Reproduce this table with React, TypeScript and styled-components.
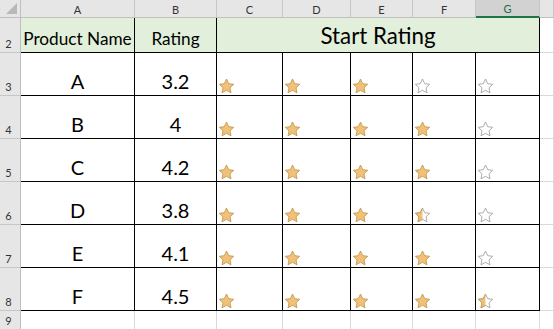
import React from "react";
import styled, { createGlobalStyle, css } from "styled-components";

const GlobalStyle = createGlobalStyle`
  html, body {
    margin: 0;
    padding: 0;
    background: #ffffff;
    overflow: hidden;
  }
  body {
    font-family: Lato, "Open Sans", "Liberation Sans", sans-serif;
  }
`;

const colWidths = [21, 114, 82, 66, 68, 62, 63, 64, 14];
const rowHeights = [18, 35, 43, 43, 43, 43, 43, 43, 19];

const Sheet = styled.div`
  display: grid;
  grid-template-columns: ${colWidths.map((w) => `${w}px`).join(" ")};
  grid-template-rows: ${rowHeights.map((h) => `${h}px`).join(" ")};
  width: 554px;
  height: 329px;
  overflow: hidden;
  background: #ffffff;
`;

const Corner = styled.div`
  position: relative;
  background: #e6e6e6;
  border-right: 1px solid #bfbfbf;
  border-bottom: 1px solid #bfbfbf;
  &::after {
    content: "";
    position: absolute;
    right: 3px;
    bottom: 3px;
    width: 0;
    height: 0;
    border-left: 11px solid transparent;
    border-bottom: 11px solid #b8b8b8;
  }
`;

const ColHead = styled.div<{ $active?: boolean }>`
  display: flex;
  align-items: center;
  justify-content: center;
  background: ${(p) => (p.$active ? "#d2d2d2" : "#e6e6e6")};
  color: ${(p) => (p.$active ? "#1e6b46" : "#333333")};
  border-right: 1px solid #c6c6c6;
  border-bottom: ${(p) => (p.$active ? "2px solid #217346" : "1px solid #bfbfbf")};
  font-size: 11px;
  padding-top: 1px;
  box-sizing: border-box;
`;

const RowHead = styled.div`
  display: flex;
  align-items: flex-end;
  justify-content: center;
  padding: 0 3px 2px 0;
  box-sizing: border-box;
  background: #e6e6e6;
  color: #333333;
  border-right: 1px solid #bfbfbf;
  border-bottom: 1px solid #c6c6c6;
  font-size: 11px;
`;

const Cell = styled.div<{
  $green?: boolean;
  $dark?: boolean;
  $darkRight?: boolean;
  $span?: number;
  $size?: number;
}>`
  display: flex;
  align-items: flex-end;
  justify-content: center;
  box-sizing: border-box;
  overflow: hidden;
  white-space: nowrap;
  color: #000000;
  background: ${(p) => (p.$green ? "#e2efda" : "#ffffff")};
  font-size: ${(p) => p.$size ?? 20}px;
  line-height: 1.2;
  padding-bottom: 2px;
  grid-column: span ${(p) => p.$span ?? 1};
  border-right: 1px solid #d9d9d9;
  border-bottom: 1px solid #d9d9d9;
  ${(p) =>
    p.$dark &&
    css`
      border-bottom-color: #000000;
    `}
  ${(p) =>
    p.$darkRight &&
    css`
      border-right-color: #000000;
    `}
`;

const StarCell = styled(Cell)`
  justify-content: flex-start;
  padding: 0 0 1px 1px;
`;

type StarKind = "full" | "half" | "empty";

const STAR =
  "M8.5 1 L10.7 5.7 L15.7 6.3 L12 9.8 L13 14.8 L8.5 12.3 L4 14.8 L5 9.8 L1.3 6.3 L6.3 5.7 Z";

const Star = ({ kind, id }: { kind: StarKind; id: string }) => (
  <svg width="17" height="16" viewBox="0 0 17 16">
    <defs>
      <clipPath id={id}>
        <rect x="0" y="0" width="8.5" height="16" />
      </clipPath>
    </defs>
    {kind === "full" && (
      <path d={STAR} fill="#f1c17a" stroke="#c49a4e" strokeWidth="0.9" strokeLinejoin="round" />
    )}
    {kind !== "full" && (
      <path d={STAR} fill="#ffffff" stroke="#a3a3a3" strokeWidth="0.9" strokeLinejoin="round" />
    )}
    {kind === "half" && (
      <path
        d={STAR}
        fill="#f1c17a"
        stroke="#c49a4e"
        strokeWidth="0.9"
        strokeLinejoin="round"
        clipPath={`url(#${id})`}
      />
    )}
  </svg>
);

const products = [
  { name: "A", rating: 3.2 },
  { name: "B", rating: 4 },
  { name: "C", rating: 4.2 },
  { name: "D", rating: 3.8 },
  { name: "E", rating: 4.1 },
  { name: "F", rating: 4.5 },
];

const starKind = (rating: number, i: number): StarKind => {
  const left = rating - i;
  if (left >= 1) return "full";
  if (left >= 0.5) return "half";
  return "empty";
};

const letters = ["A", "B", "C", "D", "E", "F", "G"];

export default function App() {
  return (
    <>
      <GlobalStyle />
      <Sheet>
        <Corner />
        {letters.map((l) => (
          <ColHead key={l} $active={l === "G"}>
            {l}
          </ColHead>
        ))}
        <ColHead />

        <RowHead>2</RowHead>
        <Cell $green $dark $darkRight $size={17.2}>
          Product Name
        </Cell>
        <Cell $green $dark $darkRight $size={17.2}>
          Rating
        </Cell>
        <Cell $green $dark $darkRight $span={5} $size={22.3}>
          Start Rating
        </Cell>
        <Cell />

        {products.map((p, r) => (
          <React.Fragment key={p.name}>
            <RowHead>{r + 3}</RowHead>
            <Cell $dark $darkRight>
              {p.name}
            </Cell>
            <Cell $dark $darkRight>
              {p.rating}
            </Cell>
            {[0, 1, 2, 3, 4].map((i) => (
              <StarCell key={i} $dark $darkRight>
                <Star kind={starKind(p.rating, i)} id={`s${r}-${i}`} />
              </StarCell>
            ))}
            <Cell />
          </React.Fragment>
        ))}

        <RowHead>9</RowHead>
        {letters.map((l) => (
          <Cell key={l} />
        ))}
        <Cell />
      </Sheet>
    </>
  );
}
